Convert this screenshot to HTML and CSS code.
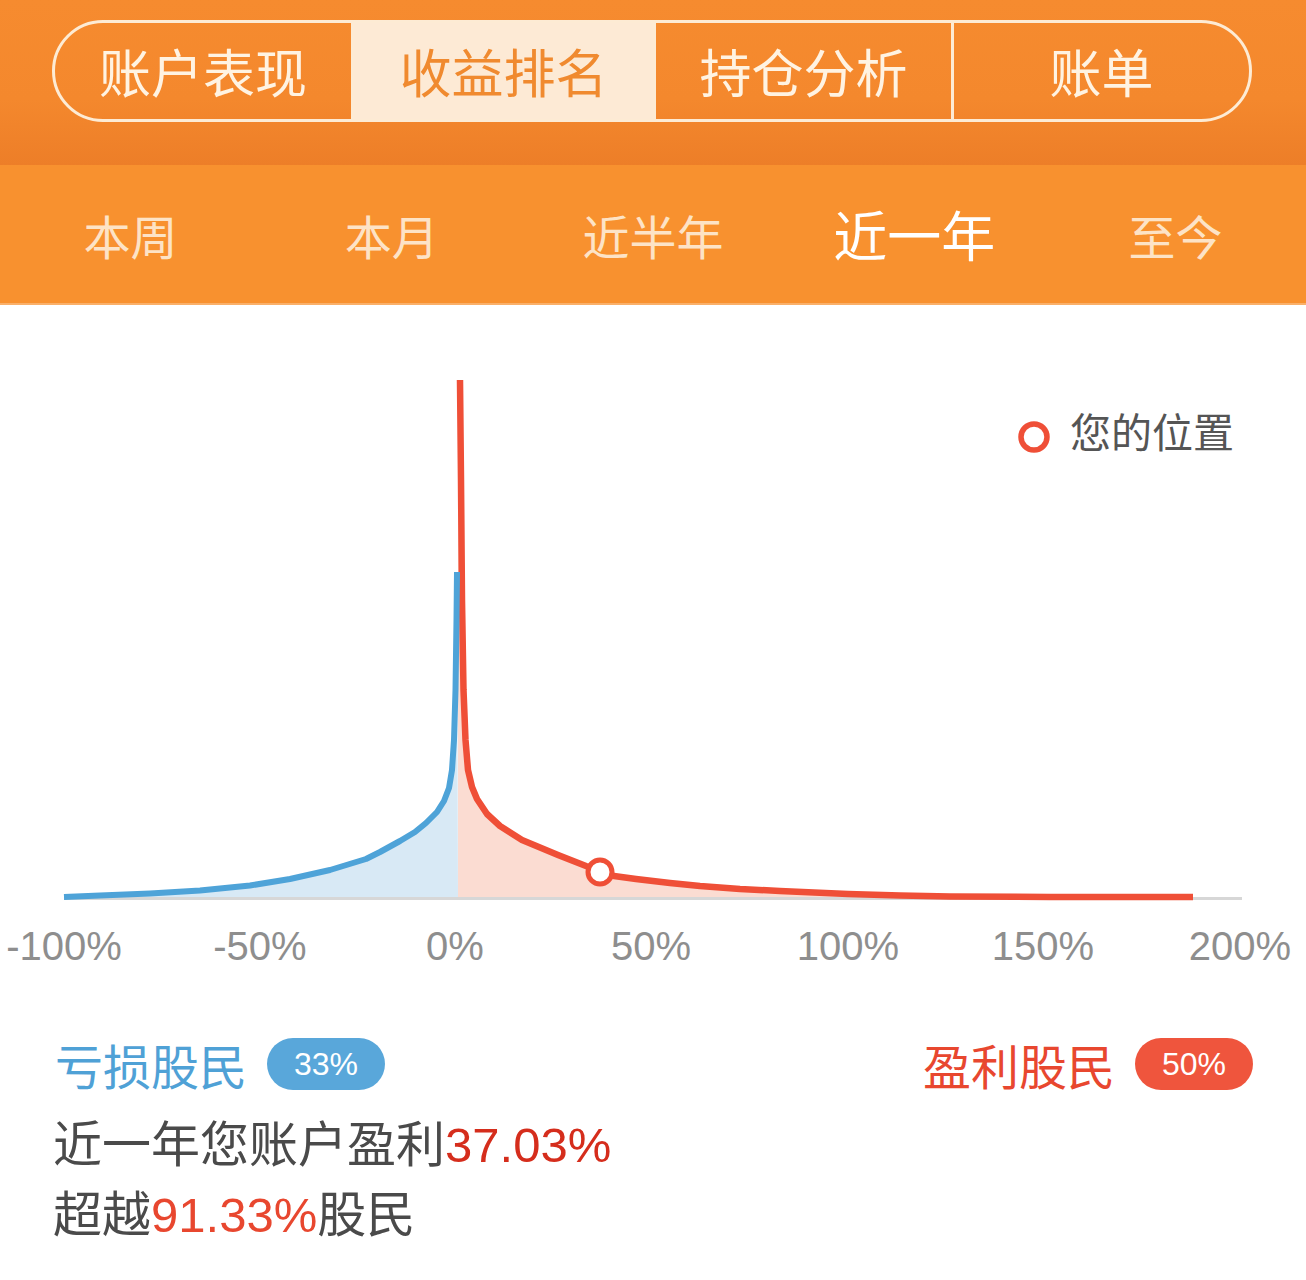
FILE: index.html
```html
<!DOCTYPE html>
<html lang="zh-CN">
<head>
<meta charset="utf-8">
<title>收益排名</title>
<link rel="stylesheet" href="styles.css">
</head>
<body>
<header class="topbar">
  <nav class="seg">
    <div class="seg-item">账户表现</div>
    <div class="seg-item active">收益排名</div>
    <div class="seg-item">持仓分析</div>
    <div class="seg-item">账单</div>
  </nav>
</header>
<div class="periods">
  <div class="period">本周</div>
  <div class="period">本月</div>
  <div class="period">近半年</div>
  <div class="period active">近一年</div>
  <div class="period">至今</div>
</div>
<section class="chart">
  <svg class="chart-svg" width="1306" height="690" viewBox="0 305 1306 690">
    <line class="axis" x1="64" y1="898.5" x2="1242" y2="898.5"/>
    <polygon class="fill-blue" points="64,897 100,895.5 150,893.5 200,890.5 250,885.5 290,879 330,870 366,859 380,852 400,841 415,832 426,823 437,812 444,801 449,788 452,770 454,740 455.5,690 456.5,620 457,572 458,897"/>
    <polygon class="fill-red" points="458,897 458,380 460,380 461,480 462,600 463.5,690 465.5,740 468,770 472,787 477,799 487,814 500,826 522,840 558,855 586,866 614,876 636,879 670,883 700,886 740,889 780,891 848,894 900,895.5 950,896.5 1050,897 1193,897"/>
    <polyline class="line-red" points="460,380 461,480 462,600 463.5,690 465.5,740 468,770 472,787 477,799 487,814 500,826 522,840 558,855 586,866 614,876 636,879 670,883 700,886 740,889 780,891 848,894 900,895.5 950,896.5 1050,897 1193,897"/>
    <polyline class="line-blue" points="64,897 100,895.5 150,893.5 200,890.5 250,885.5 290,879 330,870 366,859 380,852 400,841 415,832 426,823 437,812 444,801 449,788 452,770 454,740 455.5,690 456.5,620 457,572"/>
    <circle class="marker" cx="600" cy="872" r="12"/>
    <circle class="marker legend-dot" cx="1034" cy="437" r="13"/>
    <text class="legend-text" x="1070" y="448">您的位置</text>
    <text class="tick" x="64" y="960">-100%</text>
    <text class="tick" x="260" y="960">-50%</text>
    <text class="tick" x="455" y="960">0%</text>
    <text class="tick" x="651" y="960">50%</text>
    <text class="tick" x="848" y="960">100%</text>
    <text class="tick" x="1043" y="960">150%</text>
    <text class="tick" x="1240" y="960">200%</text>
  </svg>
</section>
<section class="stats">
  <div class="groups">
    <div class="group loss">
      <span class="group-name">亏损股民</span>
      <span class="badge">33%</span>
    </div>
    <div class="group gain">
      <span class="group-name">盈利股民</span>
      <span class="badge">50%</span>
    </div>
  </div>
  <p class="line first">近一年您账户盈利<span class="num dark-red">37.03%</span></p>
  <p class="line">超越<span class="num red">91.33%</span>股民</p>
</section>
</body>
</html>
```
FILE: styles.css
```css
html, body {
  margin: 0;
  padding: 0;
  background: #ffffff;
}
body {
  width: 1306px;
  font-family: "Noto Sans CJK SC", sans-serif;
}
.topbar {
  height: 165px;
  box-sizing: border-box;
  padding: 20px 54px 0 52px;
  background: linear-gradient(180deg, #f68b2f 0%, #f4882d 60%, #ed7e28 100%);
}
.seg {
  display: grid;
  grid-template-columns: 296px 302px 298px 1fr;
  height: 102px;
  box-sizing: border-box;
  border: 3px solid #fdebd4;
  border-radius: 51px;
  overflow: hidden;
}
.seg-item {
  display: flex;
  align-items: center;
  justify-content: center;
  font-size: 52px;
  color: #fff3e2;
  line-height: 1;
}
.seg-item + .seg-item {
  border-left: 3px solid #fdebd4;
}
.seg-item.active {
  background: #fdead5;
  color: #f08a2f;
}
.periods {
  display: grid;
  grid-template-columns: repeat(5, 1fr);
  height: 138px;
  background: #f8912f;
  border-bottom: 2px solid #fab06a;
}
.period {
  display: flex;
  align-items: center;
  justify-content: center;
  font-size: 47px;
  color: #fde3c6;
  line-height: 1;
}
.period.active {
  font-size: 54px;
  color: #ffffff;
}
.chart {
  height: 690px;
}
.chart-svg {
  display: block;
}
.axis {
  stroke: #d7d7d7;
  stroke-width: 3;
}
.fill-blue {
  fill: #d8e9f5;
}
.fill-red {
  fill: #fbdcd2;
}
.line-blue {
  fill: none;
  stroke: #4ea3d8;
  stroke-width: 6;
  stroke-linejoin: round;
}
.line-red {
  fill: none;
  stroke: #ef4f37;
  stroke-width: 6.5;
  stroke-linejoin: round;
}
.marker {
  fill: #ffffff;
  stroke: #ef4f37;
  stroke-width: 5;
}
.legend-dot {
  stroke-width: 5.5;
}
.legend-text {
  font-family: "Noto Sans CJK SC", sans-serif;
  font-size: 41px;
  fill: #555555;
}
.tick {
  font-family: "Liberation Sans", sans-serif;
  font-size: 40px;
  fill: #8e8e8e;
  text-anchor: middle;
}
.stats {
  padding: 43px 53px 0 53px;
  font-family: "Liberation Sans", "Noto Sans CJK SC", sans-serif;
}
.groups {
  display: flex;
  justify-content: space-between;
  align-items: center;
  height: 52px;
}
.group {
  display: flex;
  align-items: center;
  gap: 20px;
}
.group-name {
  font-family: "Noto Sans CJK SC", sans-serif;
  font-size: 48px;
  line-height: 1;
}
.loss .group-name {
  margin-left: 2px;
}
.badge {
  display: flex;
  align-items: center;
  justify-content: center;
  width: 118px;
  height: 52px;
  border-radius: 26px;
  color: #ffffff;
  font-family: "Liberation Sans", sans-serif;
  font-size: 32px;
}
.loss .group-name { color: #4fa1d6; }
.loss .badge { background: #59a7da; }
.gain .group-name { color: #e8472f; }
.gain .badge { background: #ef553d; }
.line {
  margin: 0;
  font-size: 49px;
  line-height: 70px;
  color: #4a4a4a;
}
.line.first {
  margin-top: 20px;
}
.dark-red { color: #d52d1c; }
.red { color: #e8472f; }
```
